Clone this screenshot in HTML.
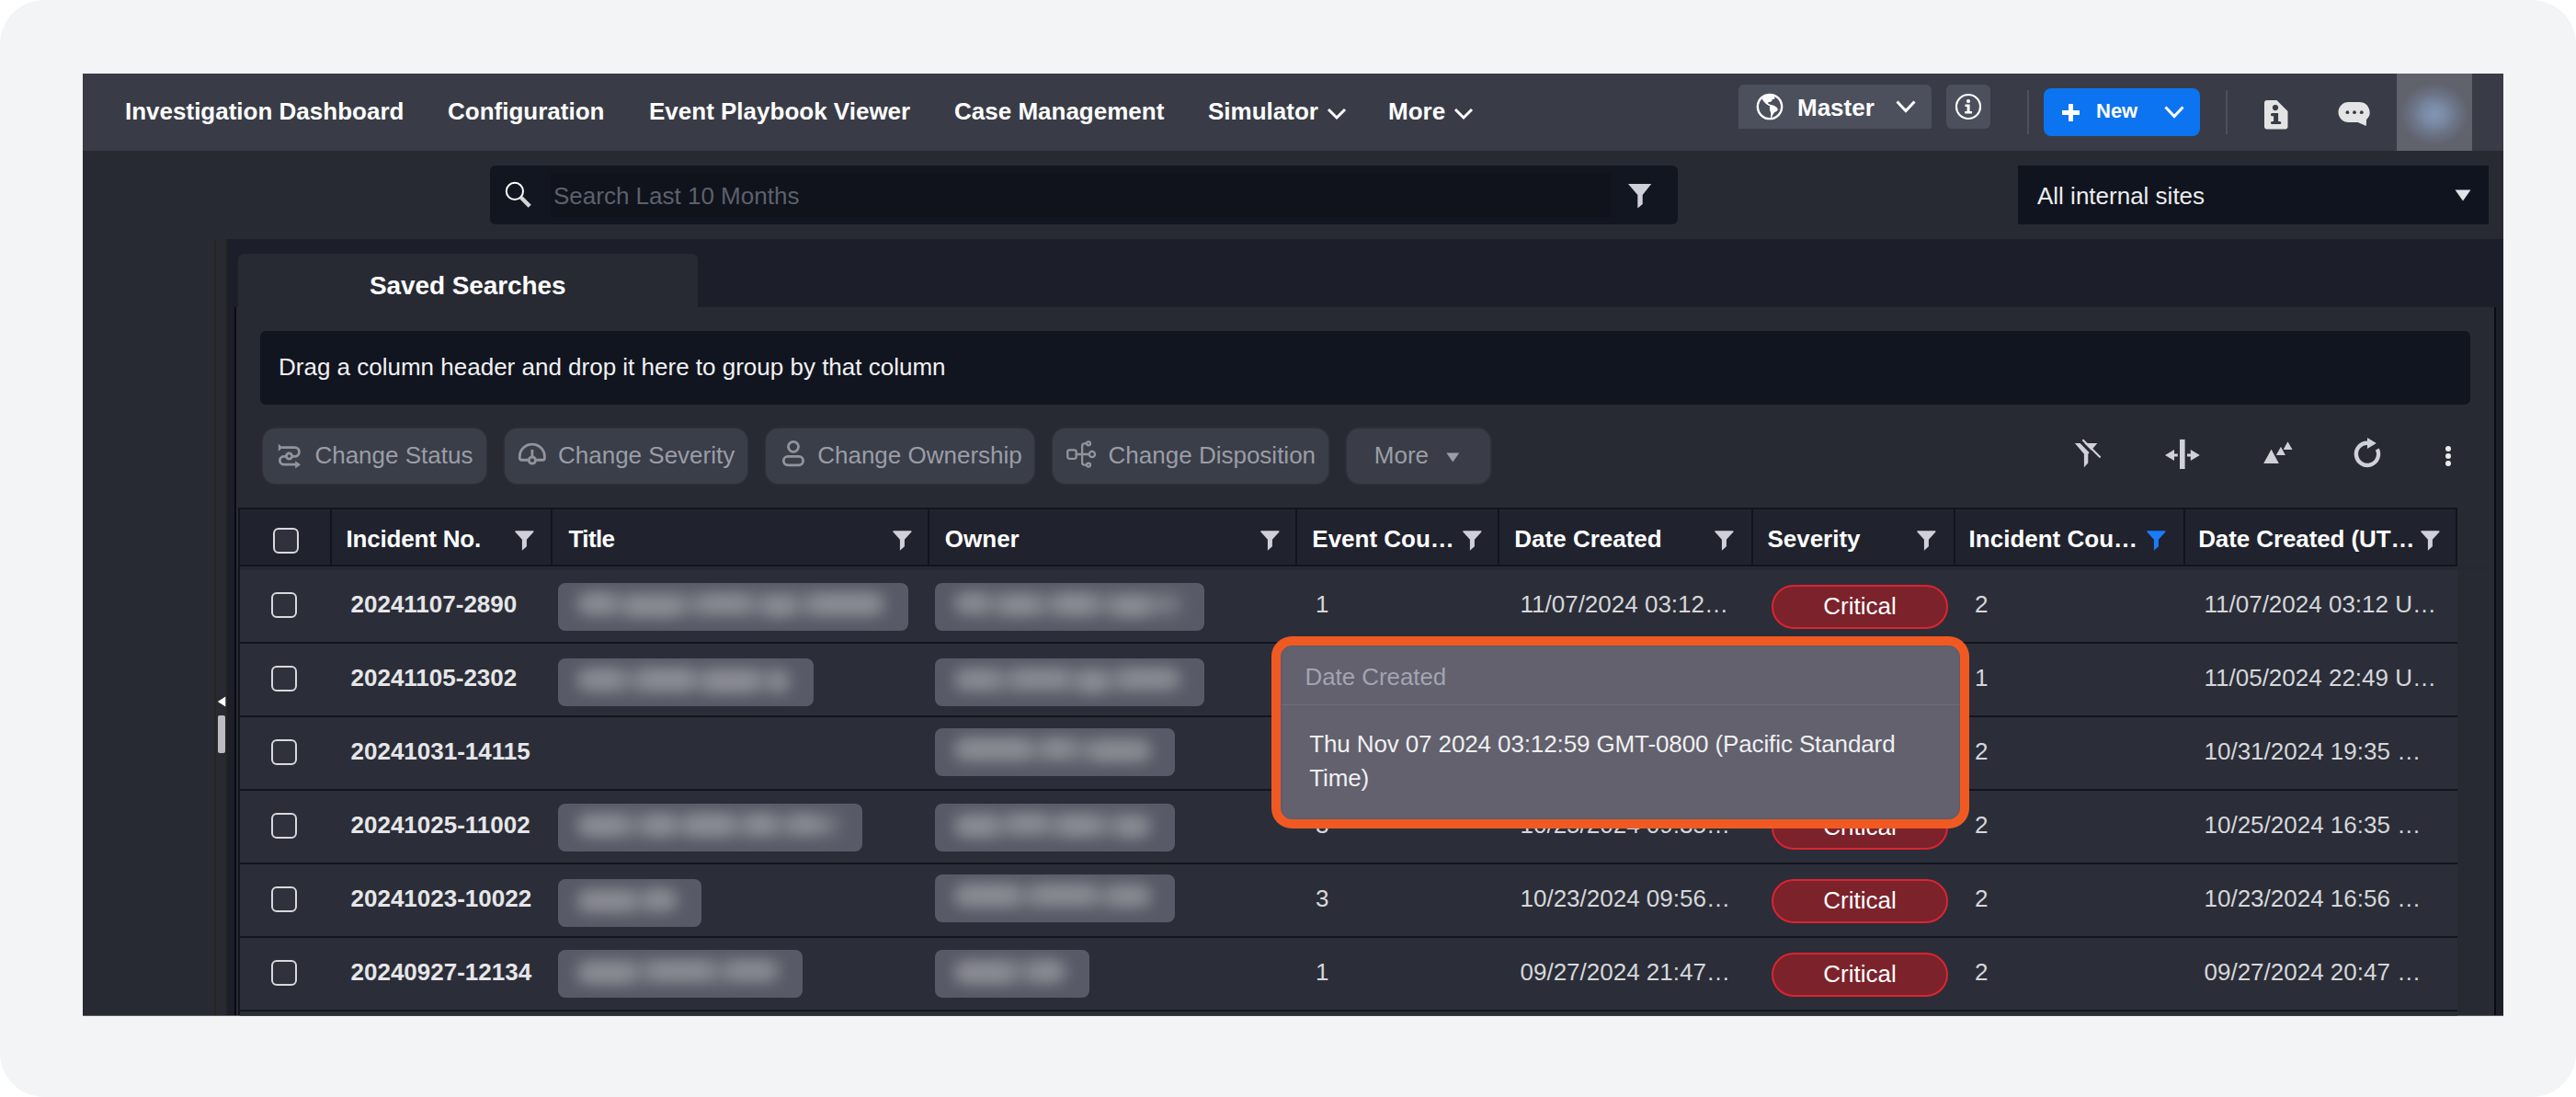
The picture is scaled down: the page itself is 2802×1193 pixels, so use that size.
<!DOCTYPE html>
<html lang="en">
<head>
<meta charset="utf-8">
<title>Investigation Dashboard</title>
<style>
*{box-sizing:border-box;margin:0;padding:0}
html,body{width:2802px;height:1193px;overflow:hidden;background:#fff}
body{font-family:"Liberation Sans",Arial,sans-serif;color:#fff;position:relative}
#frame{position:absolute;left:0;top:0;width:2802px;height:1193px;background:#f3f4f6;border-radius:48px}
#shot{position:absolute;left:0;top:0;width:2723px;height:1104.75px;clip-path:inset(80px 0 0 90px);background:#272a33;overflow:hidden}
#shot div,#shot span,#shot svg{position:absolute}
.t{white-space:nowrap;line-height:1}
.b{font-weight:700}
/* nav */
#nav{left:90px;top:80px;width:2633px;height:84px;background:#393c46}
.nv{top:108px;font-size:26px;font-weight:700;color:#fff}
/* table */
.ht{top:573px;font-size:26px;font-weight:700;color:#fff}
.row{left:261px;width:2412px;height:78px;background:#2b2e39}
.cb{left:297px;width:28px;height:28px;border:2px solid #d8d9dc;border-radius:6px}
.num{left:381.5px;font-size:26px;font-weight:700;color:#e6e6e8}
.cell{font-size:26px;color:#d6d7da}
.blur{background:#585b67;border-radius:8px;height:52px}
.crit{left:1927px;width:192px;height:48px;border:2px solid #dc2430;border-radius:24px;background:#7b222b;color:#fff;font-size:26px;text-align:center;line-height:43.5px}
.btn{top:466px;height:60px;background:#3a3e49;border-radius:14px;box-shadow:0 0 0 1.5px #2e313b}
.bt{top:482px;font-size:26px;color:#9a9da6}
</style>
</head>
<body>
<div id="frame"></div>
<div id="shot">
  <!-- NAV -->
  <div id="nav"></div>
  <span class="t nv" style="left:136px">Investigation Dashboard</span>
  <span class="t nv" style="left:487px">Configuration</span>
  <span class="t nv" style="left:706px">Event Playbook Viewer</span>
  <span class="t nv" style="left:1038px">Case Management</span>
  <span class="t nv" style="left:1314px">Simulator</span>
  <span class="t nv" style="left:1510px">More</span>
  
  <svg style="left:1443px;top:117px" width="22" height="14" viewBox="0 0 22 14"><path d="M2 2 L11 11 L20 2" fill="none" stroke="#fff" stroke-width="3"/></svg>
  <svg style="left:1581px;top:117px" width="22" height="14" viewBox="0 0 22 14"><path d="M2 2 L11 11 L20 2" fill="none" stroke="#fff" stroke-width="3"/></svg>
  <!-- Master -->
  <div style="left:1891px;top:92px;width:210px;height:48px;background:#4c505c;border-radius:6px 6px 2px 0"></div>
  <svg style="left:1910px;top:101px" width="30" height="30" viewBox="0 0 30 30">
    <circle cx="15" cy="15" r="13.15" fill="none" stroke="#fff" stroke-width="2.4"/>
    <path d="M6.56 6.77 A12 12 0 0 1 20.07 3.69 L20.5 6.5 L17.7 7.25 L17.2 8.9 L15.8 9.85 L13.4 10.3 L12.96 11.3 L15.3 12.7 L17.7 13.2 L20.07 14.1 L22.9 16 L23.86 17.9 L22.9 19.8 L20.07 21.2 L18.2 24.07 L17.2 26.4 L16.04 26.9 L16.28 22.2 L15.3 19.3 L14.86 16 L15.3 14.6 L12.96 13.2 L10.6 11.75 L8.2 8.9 Z" fill="#fff"/>
  </svg>
  <span class="t b" style="left:1955px;top:104px;font-size:26px">Master</span>
  <svg style="left:2061px;top:108px" width="24" height="16" viewBox="0 0 24 16"><path d="M2.5 2.5 L12 12.5 L21.5 2.5" fill="none" stroke="#fff" stroke-width="3"/></svg>
  <!-- info -->
  <div style="left:2117px;top:92px;width:48px;height:48px;background:#4c505c;border-radius:6px"></div>
  <svg style="left:2126px;top:101px" width="30" height="30" viewBox="0 0 30 30">
    <circle cx="15" cy="15" r="13" fill="none" stroke="#fff" stroke-width="2.2"/>
    <circle cx="15" cy="9" r="2.1" fill="#fff"/>
    <path d="M11.5 12.6 H16.6 V20 H19 V22.4 H11.2 V20 H13.6 V15 H11.5 Z" fill="#fff"/>
  </svg>
  <div style="left:2205px;top:98px;width:2px;height:48px;background:#4d515c"></div>
  <!-- New -->
  <div style="left:2223px;top:96px;width:170px;height:52px;background:#0c73f1;border-radius:8px"></div>
  <div style="left:2243px;top:120px;width:19px;height:4.5px;background:#fff"></div><div style="left:2250.2px;top:112.7px;width:4.6px;height:19px;background:#fff"></div>
  <span class="t b" style="left:2280px;top:109.5px;font-size:22px">New</span>
  <svg style="left:2353px;top:114px" width="24" height="16" viewBox="0 0 24 16"><path d="M2.5 2.5 L12 12.5 L21.5 2.5" fill="none" stroke="#fff" stroke-width="3"/></svg>
  <div style="left:2421px;top:98px;width:2px;height:48px;background:#4d515c"></div>
  <!-- doc icon -->
  <svg style="left:2462px;top:108px" width="28" height="34" viewBox="0 0 28 34">
    <path d="M4 1 H14.5 L26.5 13 V29.5 a3 3 0 0 1 -3 3 H4 a3 3 0 0 1 -3 -3 V4 a3 3 0 0 1 3 -3 Z" fill="#e4e4e4"/>
    <circle cx="13" cy="9.1" r="3.1" fill="#393c46"/>
    <path d="M9.5 15.1 H16.1 V23.9 H17.8 a1.55 1.55 0 0 1 0 3.1 H9.5 a1.55 1.55 0 0 1 0 -3.1 H11.1 V18.2 H9.5 a1.55 1.55 0 0 1 0 -3.1 Z" fill="#393c46"/>
  </svg>
  <!-- chat icon -->
  <svg style="left:2543px;top:110px" width="36" height="28" viewBox="0 0 36 28">
    <path d="M11.5 1 H23.5 a11 11 0 0 1 7.6 19 L30.8 27 L21.6 23 H11.5 a11 11 0 0 1 0 -22 Z" fill="#e4e4e4"/>
    <circle cx="10.4" cy="12.2" r="1.9" fill="#393c46"/><circle cx="18" cy="12.2" r="1.9" fill="#393c46"/><circle cx="25.8" cy="12.2" r="1.9" fill="#393c46"/>
  </svg>
  <!-- avatar -->
  <div style="left:2607px;top:80px;width:82px;height:84px;background:radial-gradient(ellipse 38px 34px at 41px 44px,#8295b4 0%,#7a8aa5 30%,#6b7385 65%,#60626c 100%)"></div>

  
  <!-- search -->
  <div style="left:533px;top:180px;width:1292px;height:64px;background:#121620;border-radius:6px"></div>
  <div style="left:599px;top:188px;width:1153px;height:48px;background:#10131c"></div>
  <svg style="left:548px;top:196px" width="32" height="32" viewBox="0 0 32 32">
    <circle cx="11.9" cy="11.9" r="9.1" fill="none" stroke="#fff" stroke-width="2"/>
    <path d="M18.5 18.5 L28.2 28.2" stroke="#d4d5d8" stroke-width="4.4" fill="none"/>
  </svg>
  <span class="t" style="left:602px;top:200px;font-size:26px;color:#5c616d">Search Last 10 Months</span>
  <svg style="left:1771.25px;top:199.75px" width="27" height="28" viewBox="0 0 27 28"><path d="M0 0 H25.25 L15.7 12.1 V22.1 L10.3 26.5 V12.1 Z" fill="#cfd0da"/></svg>
  <!-- sites -->
  <div style="left:2195px;top:180px;width:512px;height:64px;background:#10141f"></div>
  <span class="t" style="left:2216px;top:200px;font-size:26px;color:#eceded">All internal sites</span>
  <svg style="left:2670px;top:206px" width="18" height="13" viewBox="0 0 18 13"><path d="M0.5 0.5 H17.5 L9 12.5 Z" fill="#e2e3e8"/></svg>

  
  <!-- left splitter lines -->
  <div style="left:233px;top:260px;width:2px;height:844px;background:#25271f"></div>
  <div style="left:245px;top:260px;width:2px;height:844px;background:#25271f"></div>
  <div style="left:247px;top:260px;width:2476px;height:844px;background:#1c1f29"></div>
  <!-- content panel -->
  <div style="left:255px;top:334px;width:2460px;height:770px;background:#0a0b10"></div>
  <div style="left:257px;top:334px;width:2456px;height:770px;background:#272a33"></div>
  <!-- tab -->
  <div style="left:259px;top:276px;width:500px;height:60px;background:#272a33;border-radius:6px 6px 0 0"></div>
  <span class="t b" style="left:402px;top:297px;font-size:28px;letter-spacing:-0.1px">Saved Searches</span>
  <!-- splitter handle -->
  <svg style="left:236px;top:757px" width="10" height="12" viewBox="0 0 10 12"><path d="M9.3 0.6 V11.4 L0.8 6 Z" fill="#fff"/></svg>
  <div style="left:237px;top:778px;width:8.3px;height:40.5px;background:#bcbcc0;border-radius:2px"></div>
  <!-- group panel -->
  <div style="left:283px;top:360px;width:2404px;height:80px;background:#111520;border-radius:6px"></div>
  <span class="t" style="left:303px;top:386px;font-size:26px;color:#f2f2f3">Drag a column header and drop it here to group by that column</span>

    <!-- toolbar buttons -->
  <div class="btn" style="left:285.5px;width:243.5px"></div>
  <div class="btn" style="left:548.75px;width:264.25px"></div>
  <div class="btn" style="left:833px;width:292px"></div>
  <div class="btn" style="left:1145px;width:300px"></div>
  <div class="btn" style="left:1465px;width:156px;background:#3a3d47;box-shadow:0 0 0 2px #2d3039"></div>
  <svg style="left:302px;top:482px" width="28" height="29" viewBox="0 0 28 29" fill="none" stroke="#92949c" stroke-width="2.8">
    <path d="M4.6 4.6 H18.6 A4.87 4.87 0 0 1 18.6 14.35 H15.6"/>
    <path d="M9.4 14.35 H6.6 A4.43 4.43 0 0 0 6.6 23.2 H20"/>
    <circle cx="12.5" cy="14" r="3.1"/>
    <path d="M0.8 0.8 L5.6 4.7 L0.8 8.8 Z" fill="#92949c" stroke="none"/>
    <path d="M19.2 19.2 L25 23.2 L19.2 27.4 Z" fill="#92949c" stroke="none"/>
  </svg>
  <svg style="left:563px;top:481px" width="32" height="26" viewBox="0 0 32 26" fill="none" stroke="#92949c" stroke-width="2.8">
    <path d="M11.6 19.25 H4.3 a2 2 0 0 1 -2 -2 V15.65 A13.55 13.55 0 0 1 29.4 15.65 V17.25 a2 2 0 0 1 -2 2 H20.2"/>
    <circle cx="15.9" cy="19.6" r="3.6"/>
    <path d="M15.9 16 V7.9"/>
  </svg>
  <svg style="left:850px;top:478px" width="26" height="30" viewBox="0 0 26 30" fill="none" stroke="#92949c" stroke-width="2.8">
    <circle cx="13" cy="7.85" r="5.55"/>
    <rect x="2.3" y="18.3" width="21.3" height="9.5" rx="4.75"/>
  </svg>
  <svg style="left:1160px;top:478px" width="33" height="32" viewBox="0 0 33 32" fill="none" stroke="#92949c" stroke-width="2.3">
    <rect x="1.25" y="11.45" width="9.4" height="9.4" rx="2"/>
    <path d="M10.65 16 H24.8 M17.1 16 V6.9 a2.6 2.6 0 0 1 2.6 -2.6 H22 M17.1 16 V25 a2.6 2.6 0 0 0 2.6 2.6 H22"/>
    <circle cx="24" cy="4.3" r="2"/><circle cx="27.9" cy="16" r="3.1"/><circle cx="24" cy="27.6" r="2"/>
  </svg>
  <span class="t bt" style="left:342.4px">Change Status</span>
  <span class="t bt" style="left:607px">Change Severity</span>
  <span class="t bt" style="left:889.2px">Change Ownership</span>
  <span class="t bt" style="left:1205.6px">Change Disposition</span>
  <span class="t bt" style="left:1494.8px">More</span>
  <svg style="left:1573px;top:491.5px" width="15" height="11" viewBox="0 0 15 11"><path d="M0.3 0.4 H14.3 L7.3 10.4 Z" fill="#9a9da6"/></svg>
  <svg style="left:2256px;top:477px" width="30" height="33" viewBox="0 0 30 33">
    <path d="M0.9 4.9 H25.3 L15.3 16.8 V26.6 L10.9 31.2 V16.8 Z" fill="#cfd1d7"/>
    <path d="M7.2 3.4 L26.6 22.9" stroke="#272a33" stroke-width="3.4" fill="none"/>
    <path d="M9.4 1.3 L28.6 20.6" stroke="#cfd1d7" stroke-width="2.1" fill="none"/>
  </svg>
  <svg style="left:2354px;top:477px" width="40" height="34" viewBox="0 0 40 34">
    <rect x="17" y="0.9" width="5.6" height="32.1" fill="#cfd1d7"/>
    <path d="M1 18 L11 12 V16.6 H14.8 V19.4 H11 V24 Z" fill="#cfd1d7"/>
    <path d="M38.8 18 L28.8 12 V16.6 H25 V19.4 H28.8 V24 Z" fill="#cfd1d7"/>
  </svg>
  <svg style="left:2460px;top:479px" width="35" height="28" viewBox="0 0 35 28">
    <path d="M23.6 10 L28.5 1.2 L33.5 10 Z" fill="#cfd1d7"/>
    <path d="M14.6 16.7 L21 5.3 L27.1 16.7 Z" fill="#cfd1d7" stroke="#272a33" stroke-width="1.4"/>
    <path d="M0.9 25.8 L10.6 8.2 L20.1 25.8 Z" fill="#cfd1d7" stroke="#272a33" stroke-width="1.4"/>
  </svg>
  <svg style="left:2559px;top:475px" width="32" height="35" viewBox="0 0 32 35">
    <path d="M16 6.70 A12.1 12.1 0 1 0 26.83 13.40" fill="none" stroke="#cfd1d7" stroke-width="4.4"/>
    <path d="M16 1 L25.8 7 L16 13 Z" fill="#cfd1d7"/>
  </svg>
  <div style="left:2660.45px;top:484.84999999999997px;width:5.7px;height:5.7px;border-radius:3px;background:#ebebee"></div>
  <div style="left:2660.45px;top:492.84999999999997px;width:5.7px;height:5.7px;border-radius:3px;background:#ebebee"></div>
  <div style="left:2660.45px;top:501.15px;width:5.7px;height:5.7px;border-radius:3px;background:#ebebee"></div>
  <!-- table -->
  <div style="left:259px;top:552px;width:2414px;height:552px;background:#12151c"></div>
  <div style="left:261px;top:616px;width:2452px;height:4px;background:#262933"></div>
  <div style="left:261px;top:554px;width:98px;height:60px;background:#20232d"></div>
  <div style="left:361px;top:554px;width:238px;height:60px;background:#20232d"></div>
  <div style="left:601px;top:554px;width:408px;height:60px;background:#20232d"></div>
  <div style="left:1011px;top:554px;width:398px;height:60px;background:#20232d"></div>
  <div style="left:1411px;top:554px;width:218px;height:60px;background:#20232d"></div>
  <div style="left:1631px;top:554px;width:274px;height:60px;background:#20232d"></div>
  <div style="left:1907px;top:554px;width:218px;height:60px;background:#20232d"></div>
  <div style="left:2127px;top:554px;width:248px;height:60px;background:#20232d"></div>
  <div style="left:2377px;top:554px;width:294px;height:60px;background:#20232d"></div>
  <div class="cb" style="left:297px;top:574px;background:#2f323c"></div>
  <span class="t ht" style="left:376.5px;letter-spacing:-0.18px">Incident No.</span>
  <span class="t ht" style="left:618.5px;letter-spacing:-0.6px">Title</span>
  <span class="t ht" style="left:1027.8px;">Owner</span>
  <span class="t ht" style="left:1427.3px;">Event Cou…</span>
  <span class="t ht" style="left:1647.3px;">Date Created</span>
  <span class="t ht" style="left:1922.4px;">Severity</span>
  <span class="t ht" style="left:2141.6px;">Incident Cou…</span>
  <span class="t ht" style="left:2391.2px;letter-spacing:-0.1px">Date Created (UT…</span>
  <svg style="left:560px;top:576.5px" width="21" height="23" viewBox="0 0 21 23"><path d="M0.9 0.3 H19.9 a0.7 0.7 0 0 1 0.5 1.2 L12.9 9.8 V17.3 L7.9 21.8 V9.8 L0.4 1.5 a0.7 0.7 0 0 1 0.5 -1.2 Z" fill="#cfd0da"/></svg>
  <svg style="left:970.75px;top:576.5px" width="21" height="23" viewBox="0 0 21 23"><path d="M0.9 0.3 H19.9 a0.7 0.7 0 0 1 0.5 1.2 L12.9 9.8 V17.3 L7.9 21.8 V9.8 L0.4 1.5 a0.7 0.7 0 0 1 0.5 -1.2 Z" fill="#cfd0da"/></svg>
  <svg style="left:1370.75px;top:576.5px" width="21" height="23" viewBox="0 0 21 23"><path d="M0.9 0.3 H19.9 a0.7 0.7 0 0 1 0.5 1.2 L12.9 9.8 V17.3 L7.9 21.8 V9.8 L0.4 1.5 a0.7 0.7 0 0 1 0.5 -1.2 Z" fill="#cfd0da"/></svg>
  <svg style="left:1590.75px;top:576.5px" width="21" height="23" viewBox="0 0 21 23"><path d="M0.9 0.3 H19.9 a0.7 0.7 0 0 1 0.5 1.2 L12.9 9.8 V17.3 L7.9 21.8 V9.8 L0.4 1.5 a0.7 0.7 0 0 1 0.5 -1.2 Z" fill="#cfd0da"/></svg>
  <svg style="left:1865.25px;top:576.5px" width="21" height="23" viewBox="0 0 21 23"><path d="M0.9 0.3 H19.9 a0.7 0.7 0 0 1 0.5 1.2 L12.9 9.8 V17.3 L7.9 21.8 V9.8 L0.4 1.5 a0.7 0.7 0 0 1 0.5 -1.2 Z" fill="#cfd0da"/></svg>
  <svg style="left:2085.25px;top:576.5px" width="21" height="23" viewBox="0 0 21 23"><path d="M0.9 0.3 H19.9 a0.7 0.7 0 0 1 0.5 1.2 L12.9 9.8 V17.3 L7.9 21.8 V9.8 L0.4 1.5 a0.7 0.7 0 0 1 0.5 -1.2 Z" fill="#cfd0da"/></svg>
  <svg style="left:2335px;top:576.5px" width="21" height="23" viewBox="0 0 21 23"><path d="M0.9 0.3 H19.9 a0.7 0.7 0 0 1 0.5 1.2 L12.9 9.8 V17.3 L7.9 21.8 V9.8 L0.4 1.5 a0.7 0.7 0 0 1 0.5 -1.2 Z" fill="#1a7cfa"/></svg>
  <svg style="left:2633px;top:576.5px" width="21" height="23" viewBox="0 0 21 23"><path d="M0.9 0.3 H19.9 a0.7 0.7 0 0 1 0.5 1.2 L12.9 9.8 V17.3 L7.9 21.8 V9.8 L0.4 1.5 a0.7 0.7 0 0 1 0.5 -1.2 Z" fill="#cfd0da"/></svg>
  <div class="row" style="top:619.5px;height:78.5px"></div>
  <div class="cb" style="left:295px;top:644px;background:#2f323c"></div>
  <span class="t num" style="top:644px">20241107-2890</span>
  <div class="blur" style="left:607px;top:634px;width:381px;overflow:hidden"><div style="left:22px;top:13px;width:333px;height:21px;background:#7d7f88;border-radius:10px;filter:blur(9px)"></div><div style="left:24px;top:14px;width:38px;height:16px;background:#8d8f96;border-radius:9px;filter:blur(8px)"></div><div style="left:73px;top:17px;width:61px;height:17px;background:#8d8f96;border-radius:9px;filter:blur(8px)"></div><div style="left:154px;top:15px;width:54px;height:14px;background:#8d8f96;border-radius:9px;filter:blur(8px)"></div><div style="left:225px;top:17px;width:31px;height:17px;background:#8d8f96;border-radius:9px;filter:blur(8px)"></div><div style="left:275px;top:14px;width:76px;height:17px;background:#8d8f96;border-radius:9px;filter:blur(8px)"></div></div>
  <div class="blur" style="left:1017px;top:634px;width:293px;overflow:hidden"><div style="left:22px;top:13px;width:245px;height:21px;background:#7d7f88;border-radius:10px;filter:blur(9px)"></div><div style="left:24px;top:14px;width:33px;height:14px;background:#8d8f96;border-radius:9px;filter:blur(8px)"></div><div style="left:72px;top:16px;width:40px;height:16px;background:#8d8f96;border-radius:9px;filter:blur(8px)"></div><div style="left:131px;top:14px;width:43px;height:18px;background:#8d8f96;border-radius:9px;filter:blur(8px)"></div><div style="left:194px;top:17px;width:40px;height:17px;background:#8d8f96;border-radius:9px;filter:blur(8px)"></div></div>
  <span class="t cell" style="left:1431px;top:644px">1</span>
  <span class="t cell" style="left:1653.5px;top:644px">11/07/2024 03:12…</span>
  <div class="crit" style="top:636px">Critical</div>
  <span class="t cell" style="left:2148px;top:644px">2</span>
  <span class="t cell" style="left:2397.5px;top:644px">11/07/2024 03:12 U…</span>
  <div class="row" style="top:700.25px;height:77.75px"></div>
  <div class="cb" style="left:295px;top:724px;background:#2f323c"></div>
  <span class="t num" style="top:724px">20241105-2302</span>
  <div class="blur" style="left:607px;top:716px;width:278px;overflow:hidden"><div style="left:22px;top:13px;width:230px;height:21px;background:#7d7f88;border-radius:10px;filter:blur(9px)"></div><div style="left:24px;top:15px;width:45px;height:16px;background:#8d8f96;border-radius:9px;filter:blur(8px)"></div><div style="left:88px;top:14px;width:60px;height:18px;background:#8d8f96;border-radius:9px;filter:blur(8px)"></div><div style="left:158px;top:16px;width:60px;height:18px;background:#8d8f96;border-radius:9px;filter:blur(8px)"></div><div style="left:231px;top:17px;width:17px;height:18px;background:#8d8f96;border-radius:9px;filter:blur(8px)"></div></div>
  <div class="blur" style="left:1017px;top:716px;width:293px;overflow:hidden"><div style="left:22px;top:13px;width:245px;height:21px;background:#7d7f88;border-radius:10px;filter:blur(9px)"></div><div style="left:24px;top:16px;width:45px;height:14px;background:#8d8f96;border-radius:9px;filter:blur(8px)"></div><div style="left:85px;top:15px;width:60px;height:14px;background:#8d8f96;border-radius:9px;filter:blur(8px)"></div><div style="left:156px;top:17px;width:31px;height:18px;background:#8d8f96;border-radius:9px;filter:blur(8px)"></div><div style="left:201px;top:14px;width:62px;height:15px;background:#8d8f96;border-radius:9px;filter:blur(8px)"></div></div>
  <span class="t cell" style="left:2148px;top:724px">1</span>
  <span class="t cell" style="left:2397.5px;top:724px">11/05/2024 22:49 U…</span>
  <div class="row" style="top:780.25px;height:77.75px"></div>
  <div class="cb" style="left:295px;top:804px;background:#2f323c"></div>
  <span class="t num" style="top:804px">20241031-14115</span>
  <div class="blur" style="left:1017px;top:792px;width:261px;overflow:hidden"><div style="left:22px;top:13px;width:213px;height:21px;background:#7d7f88;border-radius:10px;filter:blur(9px)"></div><div style="left:24px;top:14px;width:80px;height:17px;background:#8d8f96;border-radius:9px;filter:blur(8px)"></div><div style="left:118px;top:14px;width:32px;height:15px;background:#8d8f96;border-radius:9px;filter:blur(8px)"></div><div style="left:170px;top:17px;width:61px;height:16px;background:#8d8f96;border-radius:9px;filter:blur(8px)"></div></div>
  <span class="t cell" style="left:2148px;top:804px">2</span>
  <span class="t cell" style="left:2397.5px;top:804px">10/31/2024 19:35 …</span>
  <div class="row" style="top:860.25px;height:77.75px"></div>
  <div class="cb" style="left:295px;top:884px;background:#2f323c"></div>
  <span class="t num" style="top:884px">20241025-11002</span>
  <div class="blur" style="left:607px;top:874px;width:331px;overflow:hidden"><div style="left:22px;top:13px;width:283px;height:21px;background:#7d7f88;border-radius:10px;filter:blur(9px)"></div><div style="left:24px;top:15px;width:50px;height:17px;background:#8d8f96;border-radius:9px;filter:blur(8px)"></div><div style="left:94px;top:14px;width:33px;height:18px;background:#8d8f96;border-radius:9px;filter:blur(8px)"></div><div style="left:138px;top:14px;width:53px;height:18px;background:#8d8f96;border-radius:9px;filter:blur(8px)"></div><div style="left:204px;top:14px;width:32px;height:17px;background:#8d8f96;border-radius:9px;filter:blur(8px)"></div><div style="left:252px;top:15px;width:34px;height:14px;background:#8d8f96;border-radius:9px;filter:blur(8px)"></div></div>
  <div class="blur" style="left:1017px;top:874px;width:261px;overflow:hidden"><div style="left:22px;top:13px;width:213px;height:21px;background:#7d7f88;border-radius:10px;filter:blur(9px)"></div><div style="left:24px;top:16px;width:44px;height:17px;background:#8d8f96;border-radius:9px;filter:blur(8px)"></div><div style="left:80px;top:14px;width:42px;height:14px;background:#8d8f96;border-radius:9px;filter:blur(8px)"></div><div style="left:134px;top:15px;width:45px;height:17px;background:#8d8f96;border-radius:9px;filter:blur(8px)"></div><div style="left:199px;top:17px;width:31px;height:17px;background:#8d8f96;border-radius:9px;filter:blur(8px)"></div></div>
  <span class="t cell" style="left:1431px;top:884px">3</span>
  <span class="t cell" style="left:1653.5px;top:884px">10/25/2024 09:35…</span>
  <div class="crit" style="top:876px">Critical</div>
  <span class="t cell" style="left:2148px;top:884px">2</span>
  <span class="t cell" style="left:2397.5px;top:884px">10/25/2024 16:35 …</span>
  <div class="row" style="top:940.25px;height:77.75px"></div>
  <div class="cb" style="left:295px;top:964px;background:#2f323c"></div>
  <span class="t num" style="top:964px">20241023-10022</span>
  <div class="blur" style="left:607px;top:956px;width:156px;overflow:hidden"><div style="left:22px;top:13px;width:108px;height:21px;background:#7d7f88;border-radius:10px;filter:blur(9px)"></div><div style="left:24px;top:16px;width:59px;height:16px;background:#8d8f96;border-radius:9px;filter:blur(8px)"></div><div style="left:95px;top:14px;width:31px;height:16px;background:#8d8f96;border-radius:9px;filter:blur(8px)"></div></div>
  <div class="blur" style="left:1017px;top:951px;width:261px;overflow:hidden"><div style="left:22px;top:13px;width:213px;height:21px;background:#7d7f88;border-radius:10px;filter:blur(9px)"></div><div style="left:24px;top:14px;width:66px;height:17px;background:#8d8f96;border-radius:9px;filter:blur(8px)"></div><div style="left:107px;top:14px;width:66px;height:15px;background:#8d8f96;border-radius:9px;filter:blur(8px)"></div><div style="left:190px;top:16px;width:41px;height:15px;background:#8d8f96;border-radius:9px;filter:blur(8px)"></div></div>
  <span class="t cell" style="left:1431px;top:964px">3</span>
  <span class="t cell" style="left:1653.5px;top:964px">10/23/2024 09:56…</span>
  <div class="crit" style="top:956px">Critical</div>
  <span class="t cell" style="left:2148px;top:964px">2</span>
  <span class="t cell" style="left:2397.5px;top:964px">10/23/2024 16:56 …</span>
  <div class="row" style="top:1020.25px;height:77.75px"></div>
  <div class="cb" style="left:295px;top:1044px;background:#2f323c"></div>
  <span class="t num" style="top:1044px">20240927-12134</span>
  <div class="blur" style="left:607px;top:1033px;width:266px;overflow:hidden"><div style="left:22px;top:13px;width:218px;height:21px;background:#7d7f88;border-radius:10px;filter:blur(9px)"></div><div style="left:24px;top:17px;width:58px;height:17px;background:#8d8f96;border-radius:9px;filter:blur(8px)"></div><div style="left:100px;top:15px;width:67px;height:15px;background:#8d8f96;border-radius:9px;filter:blur(8px)"></div><div style="left:185px;top:15px;width:51px;height:14px;background:#8d8f96;border-radius:9px;filter:blur(8px)"></div></div>
  <div class="blur" style="left:1017px;top:1033px;width:168px;overflow:hidden"><div style="left:22px;top:13px;width:120px;height:21px;background:#7d7f88;border-radius:10px;filter:blur(9px)"></div><div style="left:24px;top:16px;width:60px;height:18px;background:#8d8f96;border-radius:9px;filter:blur(8px)"></div><div style="left:104px;top:15px;width:34px;height:17px;background:#8d8f96;border-radius:9px;filter:blur(8px)"></div></div>
  <span class="t cell" style="left:1431px;top:1044px">1</span>
  <span class="t cell" style="left:1653.5px;top:1044px">09/27/2024 21:47…</span>
  <div class="crit" style="top:1036px">Critical</div>
  <span class="t cell" style="left:2148px;top:1044px">2</span>
  <span class="t cell" style="left:2397.5px;top:1044px">09/27/2024 20:47 …</span>
  <div class="row" style="top:1100.25px;height:6px"></div><!--row7-->
  <!-- tooltip -->
  <div style="left:1383px;top:691.8px;width:759px;height:209px;background:#f05a22;border-radius:22px"></div>
  <div style="left:1393.2px;top:702px;width:738.6px;height:188.6px;background:#62616d;border:1px solid #5a5c69;border-radius:12px"></div>
  <div style="left:1394px;top:766px;width:737px;height:1px;background:#6e6d79"></div>
  <span class="t" style="left:1419.5px;top:724px;font-size:25.85px;color:#a3a4b3">Date Created</span>
  <span class="t" style="left:1424.2px;top:796px;font-size:26px;letter-spacing:-0.115px;color:#f0f0f2">Thu Nov 07 2024 03:12:59 GMT-0800 (Pacific Standard</span>
  <span class="t" style="left:1424.2px;top:833px;font-size:26px;letter-spacing:-0.115px;color:#f0f0f2">Time)</span>

</div>
</body>
</html>
